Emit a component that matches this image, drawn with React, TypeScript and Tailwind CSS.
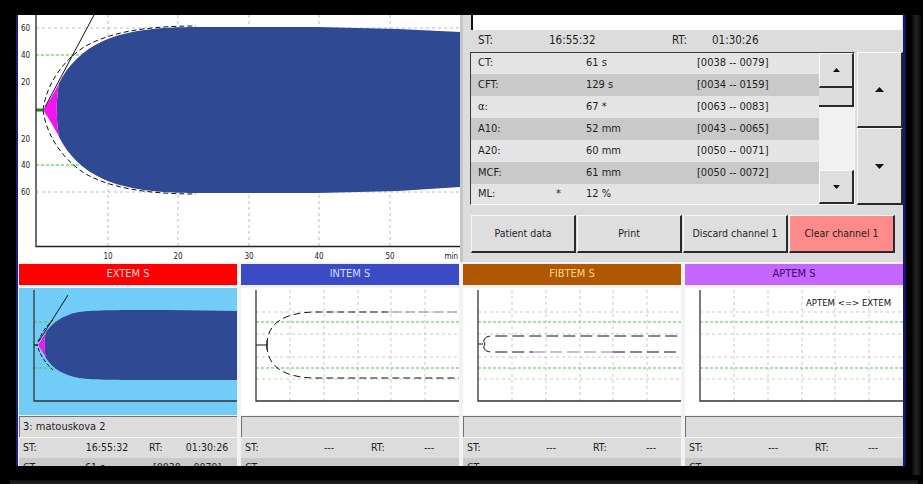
import React from "react";

const F = "font-['DejaVu_Sans_Condensed','DejaVu_Sans',sans-serif] [font-stretch:condensed]";

function MainChart() {
  const vx = [90, 160, 231, 301, 372];
  return (
    <svg width="442" height="247" className="block bg-white shrink-0">
      {vx.map((x) => (
        <line key={x} x1={x} x2={x} y1={0} y2={231} stroke="#bdbdbd" strokeDasharray="3 3" />
      ))}
      {[13, 177].map((y) => (
        <line key={y} x1={18} x2={442} y1={y} y2={y} stroke="#bdbdbd" strokeDasharray="3 3" />
      ))}
      {[40, 150].map((y) => (
        <line key={y} x1={18} x2={442} y1={y} y2={y} stroke="#2bd42b" strokeDasharray="3 2" />
      ))}
      <path
        d="M41,68 C50,50 65,35 85,26 C110,15 140,12 180,12 L300,12 L380,14 L442,17 L442,172 L380,176 L300,178 L180,178 C140,178 110,175 85,164 C65,155 50,140 41,122 C38,105 38,85 41,68 Z"
        fill="#2f4a93"
      />
      <path d="M25,95 C30,88 36,78 41,68 C38,85 38,105 41,122 C36,112 30,102 25,95 Z" fill="#f414f0" />
      <path d="M25,95 C28,72 42,48 66,32 C92,17 128,11 178,11" fill="none" stroke="#111" strokeWidth="1" strokeDasharray="5 3" />
      <path d="M25,95 C28,118 42,142 66,158 C92,173 128,179 178,179" fill="none" stroke="#111" strokeWidth="1" strokeDasharray="5 3" />
      <line x1={27} y1={92} x2={76} y2={0} stroke="#111" strokeWidth="1" />
      <line x1={18} x2={25} y1={95} y2={95} stroke="#2f7a1f" strokeWidth="3" />
      <path d="M18,0 V231.5 H442" fill="none" stroke="#222" strokeWidth="1.3" />
      <g fontSize="8" fill="#222">
        <text x="3" y="16">60</text>
        <text x="3" y="43">40</text>
        <text x="3" y="70">20</text>
        <text x="3" y="127">20</text>
        <text x="3" y="153">40</text>
        <text x="3" y="180">60</text>
        {vx.map((x, i) => (
          <text key={x} x={x} y="244" textAnchor="middle">
            {(i + 1) * 10}
          </text>
        ))}
        <text x="440" y="244" textAnchor="end">min</text>
      </g>
    </svg>
  );
}

function Arrow({ up, big }: { up: boolean; big?: boolean }) {
  const w = big ? 9 : 7;
  const h = big ? 5 : 4;
  return (
    <svg width={w} height={h} className="block">
      <polygon points={up ? `0,${h} ${w / 2},0 ${w},${h}` : `0,0 ${w / 2},${h} ${w},0`} fill="#111" />
    </svg>
  );
}

const BTN =
  "bg-[#dedede] border-t border-l border-t-[#f8f8f8] border-l-[#f8f8f8] border-r-2 border-b-2 border-r-[#2a2a2a] border-b-[#2a2a2a] flex items-center justify-center";

const rows = [
  { l: "CT:", s: "", v: "61 s", r: "[0038 -- 0079]" },
  { l: "CFT:", s: "", v: "129 s", r: "[0034 -- 0159]" },
  { l: "α:", s: "", v: "67 *", r: "[0063 -- 0083]" },
  { l: "A10:", s: "", v: "52 mm", r: "[0043 -- 0065]" },
  { l: "A20:", s: "", v: "60 mm", r: "[0050 -- 0071]" },
  { l: "MCF:", s: "", v: "61 mm", r: "[0050 -- 0072]" },
  { l: "ML:", s: "*", v: "12 %", r: "" },
];

function RightPanel() {
  return (
    <div className="w-[440px] bg-[#dcdcdc] flex flex-col">
      <div className="h-[15px] shrink-0 ml-[8px] mr-[1px] bg-white border-l-2 border-[#111]" />
      <div className="h-[22px] shrink-0 flex items-center pl-[15px] text-[11.5px]">
        <span className="w-[71px]">ST:</span>
        <span className="w-[123px]">16:55:32</span>
        <span className="w-[40px]">RT:</span>
        <span>01:30:26</span>
      </div>
      <div className="flex h-[153px] shrink-0 ml-[7px]">
        <div className="w-[385px] flex border border-t-[#3a3a3a] border-l-[#3a3a3a] border-b-[#f6f6f6] border-r-[#f6f6f6]">
          <div className="w-[348px] flex flex-col text-[11px]">
            {rows.map((r, i) => (
              <div
                key={r.l}
                className={`flex items-center shrink-0 pl-[7px] ${i === 0 ? "h-[21px]" : i === 6 ? "h-[20px]" : "h-[22px]"} ${
                  i % 2 === 0 ? "bg-[#e4e4e4]" : "bg-[#c9c9c9]"
                }`}
              >
                <span className="w-[78px]">{r.l}</span>
                <span className="w-[30px]">{r.s}</span>
                <span className="w-[111px] whitespace-pre">{r.v}</span>
                <span className="whitespace-pre">{r.r}</span>
              </div>
            ))}
          </div>
          <div className="w-[35px] flex flex-col">
            <div className={`h-[35px] shrink-0 ${BTN}`}>
              <Arrow up />
            </div>
            <div className="h-[19px] shrink-0 bg-[#dcdcdc] border-r-2 border-b-2 border-[#2a2a2a]" />
            <div className="flex-1 bg-[#f1f1f1]" />
            <div className={`h-[34px] shrink-0 ${BTN}`}>
              <Arrow up={false} />
            </div>
          </div>
        </div>
        <div className="ml-[2px] w-[46px] flex flex-col">
          <div className={`h-[76px] shrink-0 ${BTN}`}>
            <Arrow up big />
          </div>
          <div className={`h-[77px] shrink-0 ${BTN}`}>
            <Arrow up={false} big />
          </div>
        </div>
      </div>
      <div className="mt-[10px] ml-[8px] flex gap-[1px] h-[38px] shrink-0 text-[10.5px]">
        <div className={`w-[105px] ${BTN}`}>Patient data</div>
        <div className={`w-[105px] ${BTN}`}>Print</div>
        <div className={`w-[105px] ${BTN}`}>Discard channel 1</div>
        <div className={`w-[106px] ${BTN} bg-[#ff8a8a]`}>Clear channel 1</div>
      </div>
    </div>
  );
}

function Grid() {
  return (
    <g>
      {[49, 83, 117, 150, 184].map((x) => (
        <line key={x} x1={x} x2={x} y1={2} y2={113} stroke="#c9c9c9" strokeDasharray="3 3" />
      ))}
      {[24, 46, 69, 91].map((y) => (
        <line key={y} x1={15} x2={218} y1={y} y2={y} stroke="#c9c9c9" strokeDasharray="3 3" />
      ))}
      {[34, 80].map((y) => (
        <line key={y} x1={15} x2={218} y1={y} y2={y} stroke="#3fcf3f" strokeDasharray="3 2" />
      ))}
    </g>
  );
}

const AXES = <path d="M15,2 V113 H218" fill="none" stroke="#333" strokeWidth="1.3" />;

function Chart1() {
  return (
    <svg width="218" height="127" className="block bg-[#72ccf8]">
      {[34, 80].map((y) => (
        <line key={y} x1={15} x2={218} y1={y} y2={y} stroke="#3fcf3f" strokeDasharray="3 2" />
      ))}
      <path
        d="M27,44 C33,35 44,27 60,24 C75,22 100,22 150,22 L218,23 L218,92 L150,92 C100,92 75,92 60,90 C44,87 33,80 27,70 C25,62 25,52 27,44 Z"
        fill="#2f4a93"
      />
      <path d="M19,57 C22,53 25,48 27,44 C25,52 25,62 27,70 C25,66 22,61 19,57 Z" fill="#f414f0" />
      <line x1={20} y1={53} x2={49} y2={7} stroke="#111" strokeWidth="1" />
      <path d="M19,60 C22,68 27,76 34,82" fill="none" stroke="#111" strokeDasharray="4 2" />
      <path d="M19,54 C22,46 27,38 34,32" fill="none" stroke="#111" strokeDasharray="4 2" />
      <line x1={15} x2={19} y1={57} y2={57} stroke="#2f5a1f" strokeWidth="2" />
      {AXES}
    </svg>
  );
}

function Chart2() {
  return (
    <svg width="218" height="127" className="block bg-white">
      <Grid />
      <path d="M26,57 C26,36 42,25 72,24 L150,24" fill="none" stroke="#111" strokeDasharray="7 4" />
      <path d="M150,24 L218,24" fill="none" stroke="#888" strokeDasharray="10 4" />
      <path d="M26,57 C26,78 42,89 72,90 L218,90" fill="none" stroke="#111" strokeDasharray="7 4" />
      <line x1={15} x2={26} y1={57} y2={57} stroke="#111" />
      <line x1={26} x2={26} y1={52} y2={62} stroke="#111" />
      {AXES}
    </svg>
  );
}

function Chart3() {
  return (
    <svg width="218" height="127" className="block bg-white">
      <Grid />
      <path d="M22,56 C19,52 22,48 29,48 L218,48" fill="none" stroke="#111" strokeDasharray="12 5" />
      <path d="M22,56 C19,60 22,64 29,64 L70,64" fill="none" stroke="#111" strokeDasharray="12 5" />
      <path d="M70,64 L150,64" fill="none" stroke="#888" strokeDasharray="12 5" />
      <path d="M150,64 L218,64" fill="none" stroke="#111" strokeDasharray="12 5" />
      <line x1={15} x2={20} y1={56} y2={56} stroke="#111" />
      {AXES}
    </svg>
  );
}

function Chart4() {
  return (
    <svg width="218" height="127" className="block bg-white">
      <Grid />
      {AXES}
      <text x="121" y="18" fontSize="9.5" fill="#111">
        APTEM {"<=>"} EXTEM
      </text>
    </svg>
  );
}

function Channel({
  name,
  hdr,
  chart,
  label,
  st,
  rt,
  first,
}: {
  name: string;
  hdr: string;
  chart: React.ReactNode;
  label: string;
  st: string;
  rt: string;
  first?: boolean;
}) {
  return (
    <div className="w-[218px] flex flex-col shrink-0">
      <div className={`h-[21px] shrink-0 flex items-center justify-center text-[11px] ${hdr}`}>{name}</div>
      <div className="h-[3px] shrink-0" />
      <div className="h-[127px] shrink-0">{chart}</div>
      <div className="h-[1px] shrink-0" />
      <div className="h-[21px] shrink-0 bg-[#dcdcdc] border-t border-l border-[#707070] flex items-center pl-[3px] text-[11px]">
        {label}
      </div>
      <div className="h-[1px] shrink-0" />
      <div className="h-[20px] shrink-0 bg-[#dcdcdc] flex items-center pl-[4px] text-[10.5px]">
        <span className="w-[42px]">ST:</span>
        <span className="w-[84px] text-center">{st}</span>
        <span className="w-[34px]">RT:</span>
        <span className="w-[48px] text-center">{rt}</span>
      </div>
      <div className="h-[20px] shrink-0 bg-[#c9c9c9] flex items-center pl-[4px] text-[10.5px]">
        <span className="w-[62px]">CT:</span>
        {first && (
          <>
            <span className="w-[68px]">61 s</span>
            <span>[0038 -- 0079]</span>
          </>
        )}
      </div>
    </div>
  );
}

export default function App() {
  return (
    <div className="w-[923px] h-[484px] bg-black overflow-hidden pt-[15px] pl-[16px]">
      <div className="flex">
        <div
          className={`w-[890px] h-[451px] flex flex-col bg-white border-l-2 border-r-[3px] border-l-[#1c1c8c] border-r-[#15156e] text-[#1e1e1e] ${F}`}
        >
          <div className="flex h-[247px] shrink-0">
            <MainChart />
            <div className="w-[3px] bg-[#c6c6c6]" />
            <RightPanel />
          </div>
          <div className="flex-1 min-h-0 flex gap-[4px] pl-[1px] pt-[2px] bg-[#f2f2f2] overflow-hidden">
            <Channel
              name="EXTEM S"
              hdr="bg-[#ff0000] text-[#ffd6d6]"
              chart={<Chart1 />}
              label="3: matouskova 2"
              st="16:55:32"
              rt="01:30:26"
              first
            />
            <Channel name="INTEM S" hdr="bg-[#3b4bc6] text-[#d8dcff]" chart={<Chart2 />} label="" st="---" rt="---" />
            <Channel name="FIBTEM S" hdr="bg-[#b05800] text-[#ffd58a]" chart={<Chart3 />} label="" st="---" rt="---" />
            <Channel name="APTEM S" hdr="bg-[#c466ff] text-[#3a0a66]" chart={<Chart4 />} label="" st="---" rt="---" />
          </div>
        </div>
        <div className="ml-[6px] w-[9px] h-[460px] bg-linear-to-r from-[#0a0a0a] via-[#242424] to-[#0a0a0a]" />
      </div>
      <div className="mt-[5px] ml-[-6px] w-[908px] h-[12px] bg-linear-to-b from-[#121212] via-[#2c2c2c] to-[#101010]" />
    </div>
  );
}
